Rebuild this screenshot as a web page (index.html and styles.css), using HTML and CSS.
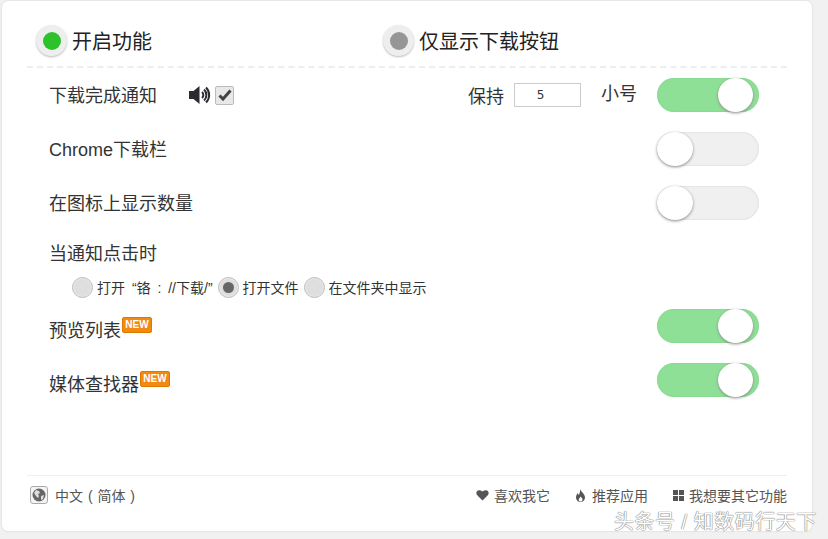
FILE: index.html
```html
<!DOCTYPE html>
<html lang="zh-CN">

	<head>
		<meta charset="UTF-8">
		<title>设置</title>
		<link rel="stylesheet" href="styles.css">
	</head>

	<body>
		<div class="card">
			<div class="head">
				<div class="mode mode-on">
					<span class="knob"><i></i></span>
					<strong>开启功能</strong>
				</div>
				<div class="mode mode-off">
					<span class="knob"><i></i></span>
					<strong>仅显示下载按钮</strong>
				</div>
			</div>

			<ul class="rows">
				<li class="row">
					<span class="label">下载完成通知</span>
					<svg class="sound" width="22" height="18" viewBox="0 0 22 18">
						<path d="M0 5h4.500l6-5v18l-6-5H0z" fill="#2a2a33" />
						<path d="M13 6a4 4 0 0 1 0 6M15 3.500a7.500 7.500 0 0 1 0 11M17 1.500a10.500 10.500 0 0 1 0 15" fill="none" stroke="#2a2a33" stroke-width="2" />
					</svg>
					<span class="check">
						<svg width="14" height="12" viewBox="0 0 14 12">
							<path d="M1.500 6.500l3.500 3.500 7.500-8.500" fill="none" stroke="#444" stroke-width="3" />
						</svg>
					</span>
					<span class="keep">保持</span>
					<span class="num">5</span>
					<span class="size">小号</span>
					<span class="toggle on"></span>
				</li>
				<li class="row">
					<span class="label">Chrome下载栏</span>
					<span class="toggle"></span>
				</li>
				<li class="row">
					<span class="label">在图标上显示数量</span>
					<span class="toggle"></span>
				</li>
				<li class="row-click">
					<span class="label">当通知点击时</span>
				</li>
				<li class="row-radios">
					<span class="radio"></span>
					<span class="radio-text radio-text-wide">打开 “铬 : //下载/”</span>
					<span class="radio radio-on"></span>
					<span class="radio-text">打开文件</span>
					<span class="radio"></span>
					<span class="radio-text">在文件夹中显示</span>
				</li>
				<li class="row row-new row-preview">
					<span class="label">预览列表</span>
					<span class="new">NEW</span>
					<span class="toggle on"></span>
				</li>
				<li class="row row-new">
					<span class="label">媒体查找器</span>
					<span class="new">NEW</span>
					<span class="toggle on"></span>
				</li>
			</ul>

			<div class="foot">
				<span class="globe">
					<svg width="14" height="14" viewBox="0 0 14 14">
						<circle cx="7" cy="7" r="6.500" fill="#666" />
						<path d="M4 2l3 1 1 2-2 1 1 2-1 2-2-2-2-3zM9 8l3-1-1 4-2 1z" fill="#ddd" />
					</svg>
				</span>
				<span class="lang">中文 ( 简体 )</span>
				<a class="link link-like" href="javascript:;">
					<svg width="13" height="12" viewBox="0 0 13 12">
						<path d="M6.500 11.500L1 6C-1 3 2-1 6.500 2.500 11-1 14 3 12 6z" fill="#555" />
					</svg>
					喜欢我它
				</a>
				<a class="link link-apps" href="javascript:;">
					<svg width="11" height="13" viewBox="0 0 11 13">
						<path d="M5 0c1 3 5 5 5 8.500C10 11 8 13 5.500 13S1 11 1 8.500C1 6.500 2 5.500 2.500 4c.5 1 1 1.500 1.500 2C4.500 4 5.500 2 5 0z" fill="#555" />
						<path d="M5.500 7.500c1 1 2 2 2 3.200S6.500 12.500 5.500 12.500 3.700 11.800 3.700 10.700 5 9 5.500 7.500z" fill="#fff" />
					</svg>
					推荐应用
				</a>
				<a class="link" href="javascript:;">
					<svg width="11" height="11" viewBox="0 0 11 11">
						<path d="M0 0h5v5H0zM6 0h5v5H6zM0 6h5v5H0zM6 6h5v5H6z" fill="#555" />
					</svg>
					我想要其它功能
				</a>
			</div>
		</div>
		<div class="mark">头条号 / 知数码行天下</div>
	</body>

</html>
```

FILE: styles.css
```css
* {
	margin: 0;
	padding: 0;
	list-style: none;
	box-sizing: border-box;
}

html,
body {
	height: 100%;
	overflow: hidden;
}

body {
	position: relative;
	background: #f1f1f1;
	font-family: "Liberation Sans", "Noto Sans CJK SC", sans-serif;
	color: #333;
}

.card {
	margin: 1px 0 0 2px;
	width: 810px;
	height: 530px;
	padding: 0 25px;
	background: #fff;
	border-radius: 6px;
	box-shadow: 0 0 2px #ccc;
}

.head {
	display: flex;
	height: 67px;
	padding: 24px 0 0 9px;
	border-bottom: 2px dashed #eee;
}

.mode {
	display: flex;
	align-items: center;
	height: 31px;
}

.mode-on {
	width: 347px;
}

.mode strong {
	margin-left: 5px;
	font-weight: normal;
	font-size: 20px;
	color: #222;
}

.knob {
	display: flex;
	align-items: center;
	justify-content: center;
	width: 31px;
	height: 31px;
	border-radius: 50%;
	background: #eee;
	box-shadow: 0 1px 2px #bbb;
}

.knob i {
	display: block;
	width: 18px;
	height: 18px;
	border-radius: 50%;
}

.mode-on .knob i {
	background: #2cc22c;
}

.mode-off .knob i {
	background: #969696;
}

.rows {
	padding: 0 28px 0 22px;
}

.row {
	display: flex;
	align-items: center;
	height: 54px;
}

.label {
	margin-top: 2px;
	font-size: 18px;
	line-height: 24px;
	color: #333;
}

.sound {
	margin-left: 32px;
}

.check {
	display: flex;
	align-items: center;
	justify-content: center;
	width: 19px;
	height: 19px;
	margin-left: 4px;
	background: #e8e8e8;
	border: 1px solid #bbb;
	border-radius: 2px;
}

.keep {
	margin-left: auto;
	font-size: 18px;
}

.num {
	width: 67px;
	height: 24px;
	margin-left: 10px;
	padding-right: 14px;
	border: 1px solid #ccc;
	font-size: 12px;
	line-height: 22px;
	text-align: center;
	font-family: "DejaVu Sans", sans-serif;
}

.size {
	margin: -6px 20px 0 20px;
	font-size: 18px;
}

.toggle {
	position: relative;
	width: 102px;
	height: 34px;
	margin-left: auto;
	border-radius: 17px;
	background: #f0f0f0;
	box-shadow: inset 0 0 2px #ccc;
}

.size + .toggle {
	margin-left: 0;
}

.toggle::after {
	content: "";
	position: absolute;
	top: 0;
	left: 0;
	width: 36px;
	height: 34px;
	border-radius: 50%;
	background: #fff;
	box-shadow: 0 1px 3px #888;
}

.toggle.on {
	background: #8ee096;
	box-shadow: inset 0 0 2px #7ccf86;
}

.toggle.on::after {
	left: 61px;
	width: 35px;
}

.row-click {
	height: 43px;
	padding-top: 12px;
}

.row-radios {
	display: flex;
	align-items: center;
	height: 28px;
	padding-left: 23px;
}

.radio {
	display: flex;
	align-items: center;
	justify-content: center;
	width: 21px;
	height: 21px;
	border-radius: 50%;
	background: #dedede;
	border: 1px solid #bdbdbd;
	box-shadow: inset 0 0 2px #fff;
}

.radio-on::after {
	content: "";
	width: 11px;
	height: 11px;
	border-radius: 50%;
	background: #666;
}

.radio-text {
	margin: 0 5px 0 4px;
	font-size: 14px;
	color: #333;
}

.radio-text-wide {
	word-spacing: 3px;
}

.row-new .label {
	margin-top: 10px;
}

.row-preview {
	height: 50px;
	margin-bottom: 2px;
}

.new {
	margin: -2px 0 0 1px;
	width: 30px;
	height: 16px;
	background: #f08a12;
	border: 1px solid #e07800;
	border-radius: 2px;
	font-family: "Liberation Sans", sans-serif;
	font-size: 10px;
	font-weight: bold;
	line-height: 14px;
	text-align: center;
	color: #fff;
}

.foot {
	display: flex;
	align-items: center;
	height: 42px;
	margin-top: 68px;
	padding: 0 0 3px 3px;
	border-top: 1px solid #eee;
	font-size: 14px;
	color: #555;
}

.globe {
	display: flex;
	align-items: center;
	justify-content: center;
	width: 18px;
	height: 18px;
	border: 1px solid #aaa;
	border-radius: 3px;
	background: #f4f4f4;
}

.lang {
	margin: 0 auto 0 7px;
	word-spacing: 1px;
}

.link {
	display: flex;
	align-items: center;
	gap: 5px;
	margin-left: 25px;
	color: #555;
	text-decoration: none;
}

.link-like {
	margin-left: 0;
}

.link-apps {
	gap: 6px;
}

.mark {
	position: absolute;
	top: 506px;
	left: 614px;
	font-size: 20px;
	letter-spacing: .5px;
	white-space: nowrap;
	color: #fff;
	text-shadow: 0 0 1px #666, 0 0 1px #666;
}
```
